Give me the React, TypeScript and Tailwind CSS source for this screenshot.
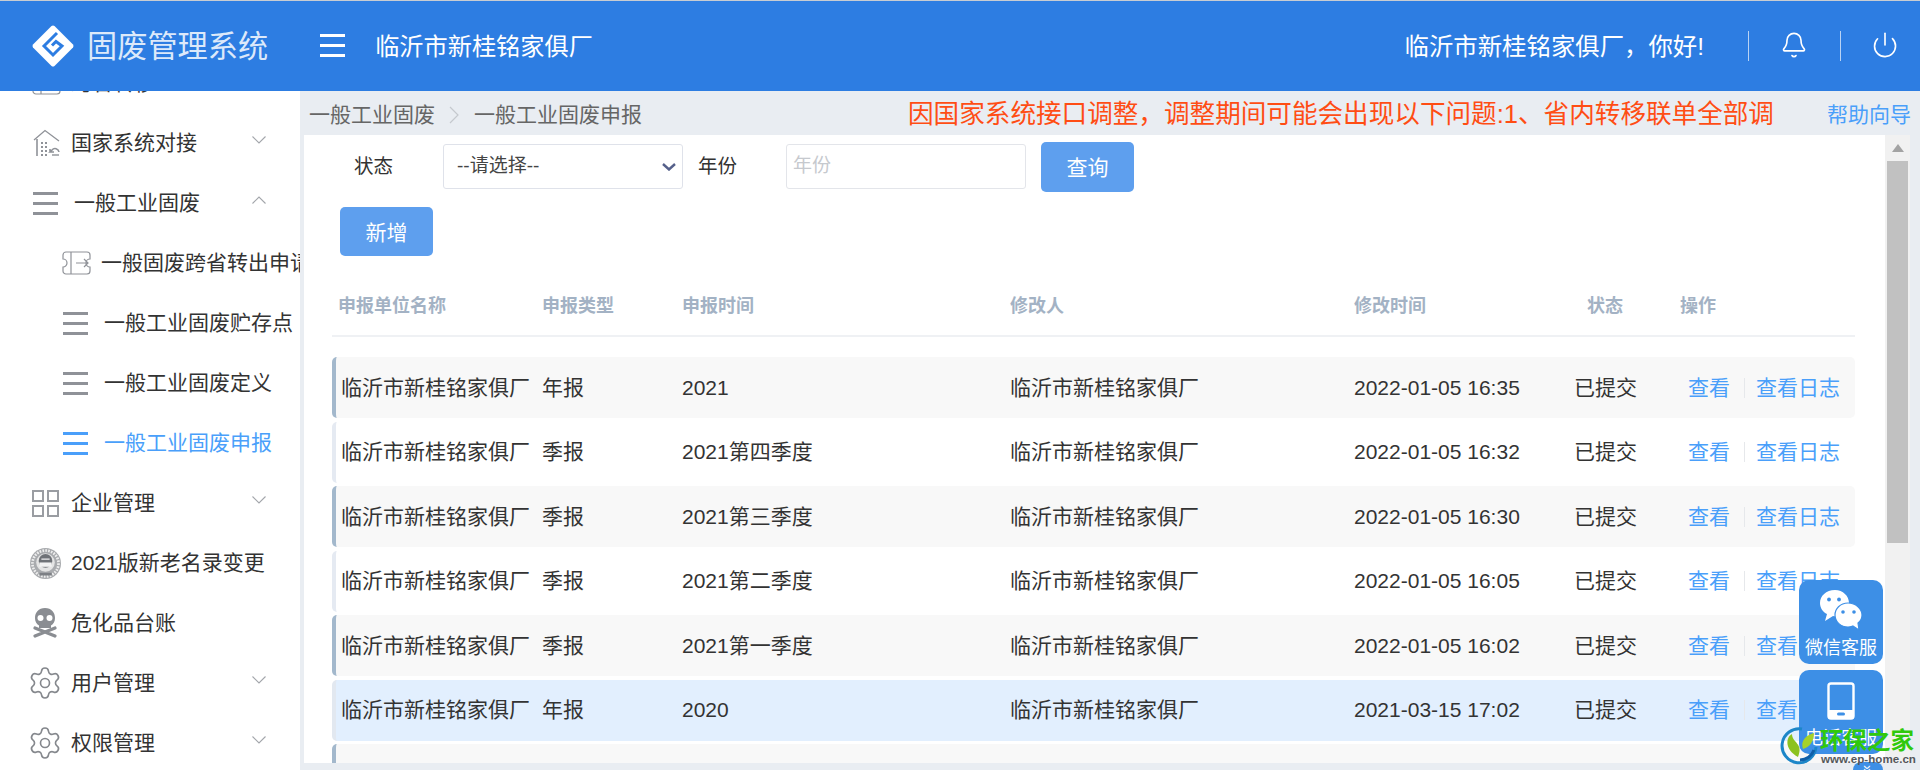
import React from "react";
import { Bell, Power, Settings } from "lucide-react";

const Bars = ({ c = "bg-[#8f9298]", w = "w-[25px]" }: { c?: string; w?: string }) => (
  <span className={"flex flex-col gap-[7px] shrink-0 " + w}>
    <span className={"h-[3px] " + c} />
    <span className={"h-[3px] " + c} />
    <span className={"h-[3px] " + c} />
  </span>
);

const Chev = ({ up = false }: { up?: boolean }) => (
  <svg width="14" height="8" viewBox="0 0 14 8" fill="none" stroke="#a3a6ab" strokeWidth="1.1" className="absolute left-[252px] top-[23px]">
    <polyline points={up ? "0.5,7.5 7,1 13.5,7.5" : "0.5,0.5 7,7 13.5,0.5"} />
  </svg>
);

const House = () => (
  <svg width="28" height="28" viewBox="0 0 28 28" fill="none" stroke="#8f9298" strokeWidth="1.3" className="shrink-0">
    <path d="M1 11 L12 1.5 L26 12" />
    <path d="M4 10 V27" strokeWidth="1.6" />
    <path d="M8 14h2M12 14h2M8 18h2M12 18h2M8 22h2M12 22h2M8 26h2M12 26h2" strokeWidth="2" />
    <path d="M26 23 a4 4 0 0 0 -7 -2 l-2 2 h4 M17 23 v-3" strokeWidth="1.6" />
    <path d="M19 26 h7" strokeWidth="1.4" />
  </svg>
);

const Ticket = () => (
  <svg width="29" height="24" viewBox="0 0 29 24" fill="none" stroke="#8f9298" strokeWidth="1.2" className="shrink-0 -ml-[1px]">
    <path d="M4 1 H25 a3 3 0 0 1 3 3 V8 a4 4 0 0 0 0 8 V20 a3 3 0 0 1 -3 3 H4 a3 3 0 0 1 -3 -3 V16 a4 4 0 0 0 0 -8 V4 a3 3 0 0 1 3 -3 Z" />
    <path d="M9 1 V23 M14 12 H26 M22 8 L26 12 L22 16" />
  </svg>
);

const GridIcon = () => (
  <svg width="27" height="27" viewBox="0 0 27 27" fill="none" stroke="#9a9da2" strokeWidth="2" className="shrink-0 -ml-[1px]">
    <rect x="1" y="1" width="10" height="10" />
    <rect x="16" y="1" width="10" height="10" />
    <rect x="1" y="16" width="10" height="10" />
    <rect x="16" y="16" width="10" height="10" />
  </svg>
);

const Emblem = () => (
  <svg width="31" height="31" viewBox="0 0 30 30" className="shrink-0 -ml-[3px]">
    <circle cx="15" cy="15" r="15" fill="#a9abae" />
    <circle cx="15" cy="15" r="12.6" fill="none" stroke="#eeeeee" strokeWidth="2.6" strokeDasharray="1.6 1.2" />
    <circle cx="15" cy="14" r="9" fill="#e4e4e4" />
    <circle cx="15" cy="12.5" r="6.6" fill="#6f7277" />
    <rect x="9" y="14" width="12" height="4.2" fill="#f2f2f2" />
    <rect x="11" y="10" width="8" height="1.6" fill="#cfd0d2" />
    <rect x="9" y="24" width="12" height="2.6" fill="#7d8085" />
  </svg>
);

const Skull = () => (
  <svg width="24" height="30" viewBox="0 0 24 30" className="shrink-0">
    <path d="M12 0 C5.5 0 2 4.5 2 10 C2 13.5 3.5 16 6 17.5 V20 H18 V17.5 C20.5 16 22 13.5 22 10 C22 4.5 18.500 0 12 0 Z" fill="#8a8d92" />
    <circle cx="7.500" cy="10" r="3" fill="#fff" />
    <circle cx="16.500" cy="10" r="3" fill="#fff" />
    <path d="M2 20 L22 28 M22 20 L2 28" stroke="#8a8d92" strokeWidth="3.2" strokeLinecap="round" />
  </svg>
);

const Gear = () => <Settings size={36} strokeWidth={1.1} color="#85888d" className="shrink-0 -ml-[6px]" />;

const WeChat = () => (
  <svg width="44" height="42" viewBox="0 0 44 42">
    <path d="M16 1 C7 1 1 7 1 14 C1 19 4 23 8 25 L6 32 L14 27 C20 28 30 26 30 14 C30 7 24 1 16 1 Z" fill="#fff" />
    <circle cx="10" cy="10.5" r="1.9" fill="#3d8fe6" />
    <circle cx="20" cy="10.5" r="1.9" fill="#3d8fe6" />
    <path d="M29 14 C21 14 16 20 16 26 C16 33 22 38 29 38 C31 38 33 38 34 37 L40 41 L39 34 C42 32 43 29 43 26 C43 20 37 14 29 14 Z" fill="#fff" stroke="#3d8fe6" strokeWidth="1.2" />
    <circle cx="24" cy="23" r="1.8" fill="#3d8fe6" />
    <circle cx="35" cy="23" r="1.8" fill="#3d8fe6" />
  </svg>
);

const Phone = () => (
  <svg width="28" height="38" viewBox="0 0 28 38" fill="none">
    <rect x="1.5" y="1.5" width="25" height="35" rx="2.5" stroke="#fff" strokeWidth="2.4" />
    <rect x="1.5" y="28" width="25" height="8.5" fill="#fff" />
    <rect x="10" y="30.5" width="8" height="3" rx="1.5" fill="#3d8fe6" />
  </svg>
);

const Logo = () => (
  <svg width="42" height="42" viewBox="0 0 42 42" className="shrink-0">
    <path d="M19.5 1 Q21 0 22.5 1 L41 19.5 Q42 21 41 22.5 L22.5 41 Q21 42 19.5 41 L1 22.5 Q0 21 1 19.5 Z" fill="#fff" />
    <path d="M25 8 L12 21 L21 30 L30 21 L24 16.5 L20 20.5" fill="none" stroke="#2d7de2" strokeWidth="3" />
  </svg>
);

const LeafLogo = () => (
  <svg width="38" height="38" viewBox="0 0 38 38">
    <path d="M22 2 A17 17 0 1 0 36 20" fill="none" stroke="#1c86c8" strokeWidth="3" />
    <path d="M20 33 A15 15 0 0 0 34 23" fill="none" stroke="#0f5fa8" strokeWidth="3" />
    <path d="M18 30 C4 22 6 10 12 7 C12 16 24 16 18 30 Z" fill="#8cc21f" />
    <path d="M23 22 C20 14 26 8 34 6 C34 14 30 20 23 22 Z" fill="#a6d12a" />
  </svg>
);

const rows = [
  ["年报", "2021", "2022-01-05 16:35"],
  ["季报", "2021第四季度", "2022-01-05 16:32"],
  ["季报", "2021第三季度", "2022-01-05 16:30"],
  ["季报", "2021第二季度", "2022-01-05 16:05"],
  ["季报", "2021第一季度", "2022-01-05 16:02"],
  ["年报", "2020", "2021-03-15 17:02"],
  ["", "", ""],
];

const Top = ({ icon, text, left, chev, up }: { icon: React.ReactNode; text: string; left: string; chev?: boolean; up?: boolean }) => (
  <div className="relative flex items-center h-[60px] shrink-0 pl-[33px]">
    <span className="w-[28px] flex justify-start shrink-0">{icon}</span>
    <span className={left + " whitespace-nowrap"}>{text}</span>
    {chev && <Chev up={up} />}
  </div>
);

const Sub = ({ icon, text, active, gap = "ml-[14px]" }: { icon: React.ReactNode; text: string; active?: boolean; gap?: string }) => (
  <div className={"flex items-center h-[60px] shrink-0 pl-[63px] whitespace-nowrap " + (active ? "text-[#4a9ffa]" : "")}>
    <span className="w-[27px] shrink-0 flex">{icon}</span>
    <span className={gap}>{text}</span>
  </div>
);

export default function App() {
  return (
    <div className="relative h-[770px] w-[1920px] overflow-hidden bg-[#e9edf2] text-[#333] text-[21px] [font-family:'Liberation_Sans','Noto_Sans_CJK_SC',sans-serif]">
      <div className="h-px bg-[#c8ccd2]" />
      <header className="relative z-10 h-[90px] bg-[#2d7de2] flex items-center text-white">
        <span className="ml-[32px]"><Logo /></span>
        <span className="ml-[13px] mt-[2px] text-[30.2px] text-[#dce9fa] whitespace-nowrap">固废管理系统</span>
        <span className="ml-[52px] -mt-[1px]"><Bars c="bg-white" /></span>
        <span className="ml-[30px] mt-[2px] text-[24.2px] whitespace-nowrap">临沂市新桂铭家俱厂</span>
        <span className="ml-auto mt-[2px] text-[24.4px] whitespace-nowrap">临沂市新桂铭家俱厂，你好!</span>
        <span className="ml-[44px] h-[30px] w-px bg-[#b9d3f4]" />
        <Bell size={28} strokeWidth={1.4} className="ml-[31px] -mt-[2px]" />
        <span className="ml-[32px] h-[30px] w-px bg-[#b9d3f4]" />
        <Power size={28} strokeWidth={1.4} className="ml-[30px] mr-[21px] -mt-[2px]" />
      </header>

      <div className="flex h-[679px]">
        <aside className="w-[300px] shrink-0 bg-white overflow-hidden">
          <div className="-mt-[38px] flex flex-col">
            <Top icon={<Ticket />} text="跨省转移" left="ml-[10px]" />
            <Top icon={<House />} text="国家系统对接" left="ml-[10px]" chev />
            <Top icon={<Bars />} text="一般工业固废" left="ml-[13px]" chev up />
            <Sub icon={<Ticket />} text="一般固废跨省转出申请" gap="ml-[11px]" />
            <Sub icon={<Bars />} text="一般工业固废贮存点" />
            <Sub icon={<Bars />} text="一般工业固废定义" />
            <Sub icon={<Bars c="bg-[#4a9ffa]" />} text="一般工业固废申报" active />
            <Top icon={<GridIcon />} text="企业管理" left="ml-[10px]" chev />
            <Top icon={<Emblem />} text="2021版新老名录变更" left="ml-[10px]" />
            <Top icon={<Skull />} text="危化品台账" left="ml-[10px]" />
            <Top icon={<Gear />} text="用户管理" left="ml-[10px]" chev />
            <Top icon={<Gear />} text="权限管理" left="ml-[10px]" chev />
          </div>
        </aside>

        <main className="flex-1 min-w-0 flex flex-col pl-[4px]">
          <div className="h-[44px] shrink-0 flex items-center pt-[3px] text-[#666] whitespace-nowrap">
            <span className="ml-[5px]">一般工业固废</span>
            <svg width="10" height="18" viewBox="0 0 10 18" fill="none" stroke="#c5c9ce" strokeWidth="1.2" className="ml-[14px]">
              <polyline points="1,1 9,9 1,17" />
            </svg>
            <span className="ml-[15px]">一般工业固废申报</span>
            <span className="ml-[266px] w-[866px] overflow-hidden text-[25.6px] text-[#ff4d14]">因国家系统接口调整，调整期间可能会出现以下问题:1、省内转移联单全部调整</span>
            <span className="ml-[53px] text-[#4a9ffa]">帮助向导</span>
          </div>

          <div className="flex h-[628px] pr-[10px]">
            <div className="flex-1 min-w-0 bg-white overflow-hidden">
              <div className="flex items-center h-[50px] mt-[7px] pl-[50px] text-[19.5px] whitespace-nowrap">
                <span>状态</span>
                <span className="relative ml-[50px] mb-[2px] block w-[240px] h-[45px]">
                  <select defaultValue="" className="appearance-none w-full h-full pl-[13px] bg-white border border-[#dfe2ea] rounded-[3px] text-[19px] text-[#444]">
                    <option value="">--请选择--</option>
                  </select>
                  <svg width="14" height="8" viewBox="0 0 14 8" fill="none" stroke="#55608a" strokeWidth="2.4" className="absolute right-[7px] top-[19px]">
                    <polyline points="1,1 7,6.5 13,1" />
                  </svg>
                </span>
                <span className="ml-[15px]">年份</span>
                <input placeholder="年份" className="ml-[49px] mb-[2px] w-[240px] h-[45px] px-[6px] border border-[#e3e5ea] rounded-[3px] text-[19px] placeholder:text-[#c6c9ce]" />
                <button className="ml-[15px] w-[93px] h-[50px] pt-[2px] rounded-[5px] bg-[#5e9fee] text-white text-[21px]">查询</button>
              </div>
              <button className="block ml-[36px] mt-[15px] w-[93px] h-[49px] pt-[2px] rounded-[5px] bg-[#5e9fee] text-white text-[21px]">新增</button>

              <div className="ml-[28px] w-[1523px] mt-[20px] h-[61px] pl-[6px] pt-[2px] grid grid-cols-[204px_140px_328px_344px_233px_93px_1fr] items-center border-b-2 border-[#eff1f4] text-[18px] font-bold text-[#a3b2c4]">
                <span>申报单位名称</span>
                <span>申报类型</span>
                <span>申报时间</span>
                <span>修改人</span>
                <span>修改时间</span>
                <span>状态</span>
                <span>操作</span>
              </div>

              <div className="ml-[28px] w-[1523px] mt-[20px] flex flex-col gap-[3.5px]">
                {rows.map((r, i) => {
                  const sel = i === 5;
                  const odd = i % 2 === 0;
                  return (
                    <div
                      key={i}
                      className={
                        "h-[61px] shrink-0 pl-[5px] grid grid-cols-[201px_140px_328px_344px_220px_114px_1fr] items-center rounded-[5px] border-l-4 whitespace-nowrap " +
                        (sel ? "bg-[#e2effe] border-[#e2e8f0]" : odd ? "bg-[#f8f8f8] border-[#a3b8cc]" : "bg-white border-[#e5eaf2]")
                      }
                    >
                      {r[1] && (
                        <>
                          <span>临沂市新桂铭家俱厂</span>
                          <span>{r[0]}</span>
                          <span>{r[1]}</span>
                          <span>临沂市新桂铭家俱厂</span>
                          <span>{r[2]}</span>
                          <span>已提交</span>
                          <span className="flex items-center text-[#4a9ffa]">
                            <span>查看</span>
                            <span className="ml-[14px] h-[20px] w-px bg-[#e6e8eb]" />
                            <span className="ml-[11px]">查看日志</span>
                          </span>
                        </>
                      )}
                    </div>
                  );
                })}
              </div>
            </div>

            <div className="w-[25px] shrink-0 bg-[#f1f1f1] flex flex-col items-center">
              <svg width="12" height="8" viewBox="0 0 12 8" className="mt-[9px]">
                <polygon points="6,0 12,8 0,8" fill="#a3a3a3" />
              </svg>
              <div className="mt-[9px] w-[21px] h-[382px] bg-[#c1c1c1]" />
            </div>
          </div>
        </main>
      </div>

      <div className="absolute z-20 left-[1799px] top-[580px] w-[84px] h-[84px] rounded-[10px] bg-[#3d8fe6] text-white text-[18px] flex flex-col items-center pt-[9px]">
        <WeChat />
        <span className="mt-[8px] whitespace-nowrap leading-none">微信客服</span>
      </div>
      <div className="absolute z-20 left-[1799px] top-[670px] w-[84px] h-[84px] rounded-[10px] bg-[#3d8fe6] text-white text-[18px] flex flex-col items-center pt-[12px]">
        <Phone />
        <span className="mt-[9px] whitespace-nowrap leading-none">电话客服</span>
      </div>
      <div className="absolute z-20 left-[1853px] top-[762px] w-[30px] h-[20px] rounded-t-[8px] bg-[#3d8fe6] text-white text-[14px] leading-none text-center">
        <span className="inline-block rotate-90">»</span>
      </div>
      <div className="absolute z-30 left-[1780px] top-[727px]"><LeafLogo /></div>
      <div className="absolute z-30 left-[1820px] top-[729px] w-[96px] text-[23.5px] leading-[24px] font-bold text-[#30c90c] whitespace-nowrap">环保之家</div>
      <div className="absolute z-30 left-[1821px] top-[752px] text-[11.6px] leading-[13px] font-bold text-[#55585c] whitespace-nowrap">www.ep-home.cn</div>
    </div>
  );
}
